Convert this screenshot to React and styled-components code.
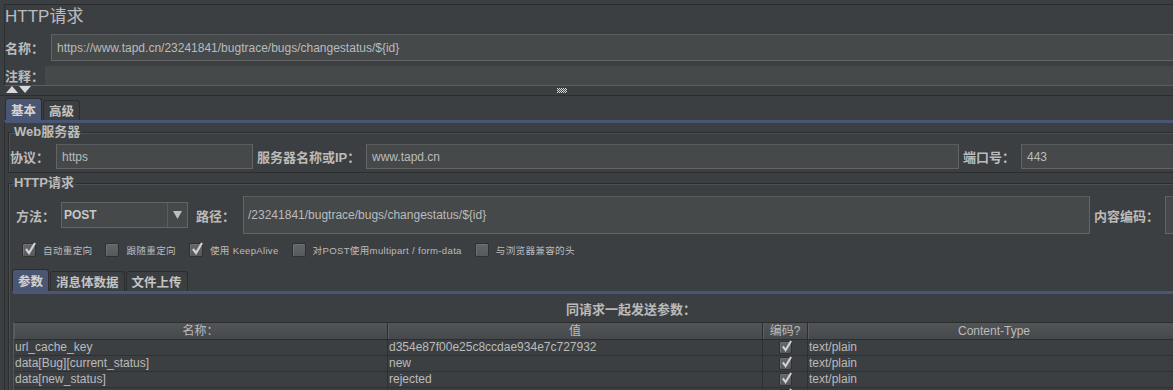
import React from "react";
import styled, { createGlobalStyle } from "styled-components";

const LAT = `"Liberation Sans", "Noto Sans CJK SC", sans-serif`;
const CJK = `"Noto Sans CJK SC", "Liberation Sans", sans-serif`;

const GlobalStyle = createGlobalStyle`
  html, body { margin: 0; padding: 0; background: #3c3f41; overflow: hidden; }
  body { font-family: ${LAT}; color: #bbbbbb; }
  * { box-sizing: border-box; }
`;

const Page = styled.div`
  width: 1250px;
  height: 390px;
  overflow: hidden;
  background: #3c3f41;
`;

const TopPanel = styled.div`
  margin: 4px 0 0 4px;
  border-top: 1px solid #2b2d2e;
  border-left: 1px solid #2b2d2e;
  border-bottom: 1px solid #5c5f61;
`;

const Title = styled.div`
  height: 23px;
  font: 17px ${LAT};
  line-height: 23px;
  color: #bbbbbb;
`;

const FieldRow = styled.div`
  display: flex;
  align-items: center;
  height: ${(p) => p.$h}px;
  margin-top: ${(p) => p.$mt || 0}px;
`;

const Label = styled.span`
  flex: none;
  width: ${(p) => p.$w}px;
  padding-left: ${(p) => p.$pl || 0}px;
  font: bold 13px ${LAT};
  color: #bbbbbb;
  white-space: nowrap;
`;

const TextInput = styled.input`
  flex: ${(p) => (p.$w ? "none" : "1 1 auto")};
  width: ${(p) => (p.$w ? `${p.$w}px` : "auto")};
  min-width: 0;
  height: ${(p) => p.$h || 25}px;
  margin: 0;
  padding: 0 0 0 ${(p) => p.$pl || 5}px;
  background: #45494a;
  border: 1px solid ${(p) => (p.$flat ? "#45494a" : "#646464")};
  border-top-color: ${(p) => (p.$flat ? "#45494a" : "#5a5d5f")};
  outline: none;
  font: 12px ${LAT};
  color: #bbbbbb;
`;

const Splitter = styled.div`
  height: 10px;
  display: flex;
  align-items: center;
  border-bottom: 1px solid #2b2d2e;
`;

const Arrows = styled.div`
  display: flex;
  gap: 1px;
  margin-left: 6px;
  height: 9px;
  align-items: flex-start;
`;

const Grip = styled.div`
  margin-left: 526px;
  display: flex;
`;

const TabArea = styled.div`
  margin-left: ${(p) => p.$ml}px;
  margin-top: ${(p) => p.$mt || 0}px;
`;

const TabRow = styled.div`
  display: flex;
  align-items: flex-end;
  gap: 1px;
  height: ${(p) => p.$h}px;
  padding-left: ${(p) => p.$pl || 0}px;
`;

const Tab = styled.div`
  height: ${(p) => (p.$active ? 22 : 20)}px;
  padding: 0 5px;
  display: flex;
  align-items: center;
  background: ${(p) => (p.$active ? "#4b5772" : "#3c3f41")};
  border: 1px solid #2b2d2e;
  border-bottom: none;
  border-radius: 3px 3px 0 0;
  font: bold 12.5px ${CJK};
  color: ${(p) => (p.$active ? "#d4d4d4" : "#c4c4c4")};
  white-space: nowrap;
`;

const TabPanel = styled.div`
  border-top: 3px solid #4a5676;
  border-left: 1px solid ${(p) => (p.$edge ? "#2b2d2e" : "transparent")};
`;

const Group = styled.fieldset`
  margin: ${(p) => p.$mt}px 0 0 3px;
  padding: ${(p) => p.$pt}px 0 ${(p) => p.$pb}px 0;
  border: 1px solid #2b2d2e;
  box-shadow: inset 1px 1px 0 #4c4f51;
  min-width: 0;
`;

const Legend = styled.legend`
  margin-left: 3px;
  padding: 0 2px;
  font: bold 13px ${LAT};
  line-height: 14px;
  color: #bbbbbb;
`;

const Combo = styled.div`
  flex: none;
  width: 127px;
  height: 26px;
  display: flex;
  background: #45494a;
  border: 1px solid #646464;
`;

const ComboText = styled.div`
  flex: 1;
  display: flex;
  align-items: center;
  padding-left: 2px;
  font: bold 12px ${LAT};
  color: #c8c8c8;
`;

const ComboButton = styled.div`
  width: 20px;
  display: flex;
  align-items: center;
  justify-content: center;
  border-left: 1px solid #5a5d5f;
`;

const CheckRow = styled.div`
  display: flex;
  align-items: center;
  gap: 13px;
  height: 16px;
  margin-top: 8px;
  padding-left: 13px;
`;

const CheckItem = styled.label`
  display: flex;
  align-items: center;
  gap: 7px;
  font: 9.6px ${LAT};
  letter-spacing: 0.3px;
  color: #bbbbbb;
  white-space: nowrap;
`;

const Box = styled.span`
  flex: none;
  position: relative;
  width: ${(p) => p.$s}px;
  height: ${(p) => p.$s}px;
  border-radius: 2px;
  background: linear-gradient(#636669, #57595c);
  border: 1px solid #2e3032;
  box-shadow: inset 1px 1px 0 #6e7174;
`;

const CheckMark = styled.svg`
  position: absolute;
  left: 1px;
  top: -3px;
  overflow: visible;
`;

const ParamsTitle = styled.div`
  height: 28px;
  display: flex;
  align-items: center;
  justify-content: center;
  font: bold 13px ${LAT};
  color: #bbbbbb;
`;

const Table = styled.div`
  width: fit-content;
  border-left: 1px solid #55585a;
`;

const cols = "374px 375px 45px 373px";

const HeadRow = styled.div`
  display: grid;
  grid-template-columns: ${cols};
  height: 18px;
  background: linear-gradient(#525557, #46494b);
  border-top: 1px solid #2b2d2e;
  border-bottom: 1px solid #2b2d2e;
`;

const HeadCell = styled.div`
  text-align: center;
  font: 12px ${LAT};
  line-height: 16px;
  color: #bbbbbb;
  border-right: 1px solid #2b2d2e;
  box-shadow: inset 1px 0 0 #5c5f61;
  white-space: nowrap;
  overflow: hidden;
`;

const Row = styled.div`
  display: grid;
  grid-template-columns: ${cols};
  height: 16px;
  border-bottom: 1px solid #2e3032;
`;

const Cell = styled.div`
  padding-left: 1px;
  font: 12px ${LAT};
  line-height: 15px;
  color: #bbbbbb;
  border-right: 1px solid #2e3032;
  white-space: nowrap;
  overflow: hidden;
  display: flex;
  align-items: center;
  justify-content: ${(p) => (p.$center ? "center" : "flex-start")};
`;

function Check({ checked, size = 14 }) {
  return (
    <Box $s={size}>
      {checked && (
        <CheckMark width={size - 2} height={size} viewBox="0 0 12 14">
          <path d="M2 8 L5 12 L11 2" fill="none" stroke="#d2d2d2" strokeWidth="2.2" strokeLinejoin="miter" />
        </CheckMark>
      )}
    </Box>
  );
}

const rows = [
  ["url_cache_key", "d354e87f00e25c8ccdae934e7c727932", "text/plain"],
  ["data[Bug][current_status]", "new", "text/plain"],
  ["data[new_status]", "rejected", "text/plain"],
  ["", "", ""],
];

export default function App() {
  return (
    <Page>
      <GlobalStyle />
      <TopPanel>
        <Title>HTTP请求</Title>
        <FieldRow $h={27} $mt={6}>
          <Label $w={46}>名称：</Label>
          <TextInput $h={27} readOnly defaultValue="https://www.tapd.cn/23241841/bugtrace/bugs/changestatus/${id}" />
        </FieldRow>
        <FieldRow $h={19} $mt={5}>
          <Label $w={40}>注释：</Label>
          <TextInput $h={19} $flat readOnly defaultValue="" />
        </FieldRow>
      </TopPanel>

      <Splitter>
        <Arrows>
          <svg width="12" height="7" viewBox="0 0 12 7"><path d="M0 7 L6 0 L12 7 Z" fill="#d8d8d8" /></svg>
          <svg width="12" height="7" viewBox="0 0 12 7"><path d="M0 0 L12 0 L6 7 Z" fill="#d8d8d8" /></svg>
        </Arrows>
        <Grip>
          <svg width="10" height="5" viewBox="0 0 10 5">
            {[0, 1, 2, 3, 4].map((y) =>
              [0, 1, 2, 3, 4, 5, 6, 7, 8, 9]
                .filter((x) => (x + y) % 2 === 0)
                .map((x) => <rect key={`${x}-${y}`} x={x} y={y} width="1" height="1" fill="#dcdcdc" />)
            )}
          </svg>
        </Grip>
      </Splitter>

      <TabArea $ml={4}>
        <TabRow $h={24} $pl={1}>
          <Tab $active>基本</Tab>
          <Tab>高级</Tab>
        </TabRow>
        <TabPanel $edge>
          <Group $mt={2} $pt={5} $pb={3}>
            <Legend>Web服务器</Legend>
            <FieldRow $h={25}>
              <Label $w={47} $pl={1}>协议：</Label>
              <TextInput $w={197} readOnly defaultValue="https" />
              <Label $w={113} $pl={4}>服务器名称或IP：</Label>
              <TextInput $w={593} readOnly defaultValue="www.tapd.cn" />
              <Label $w={62} $pl={4}>端口号：</Label>
              <TextInput readOnly defaultValue="443" />
            </FieldRow>
          </Group>

          <Group $mt={3} $pt={6} $pb={0}>
            <Legend>HTTP请求</Legend>
            <FieldRow $h={38}>
              <Label $w={52} $pl={7}>方法：</Label>
              <Combo>
                <ComboText>POST</ComboText>
                <ComboButton>
                  <svg width="9" height="8" viewBox="0 0 9 8"><path d="M0 0 L9 0 L4.5 8 Z" fill="#bdbdbd" /></svg>
                </ComboButton>
              </Combo>
              <Label $w={55} $pl={8}>路径：</Label>
              <TextInput $w={847} $h={38} $pl={4} readOnly defaultValue="/23241841/bugtrace/bugs/changestatus/${id}" />
              <Label $w={75} $pl={4}>内容编码：</Label>
              <TextInput $h={38} readOnly defaultValue="" />
            </FieldRow>

            <CheckRow>
              <CheckItem><Check checked />自动重定向</CheckItem>
              <CheckItem><Check />跟随重定向</CheckItem>
              <CheckItem><Check checked />使用 KeepAlive</CheckItem>
              <CheckItem><Check />对POST使用multipart / form-data</CheckItem>
              <CheckItem><Check />与浏览器兼容的头</CheckItem>
            </CheckRow>

            <TabArea $ml={3} $mt={11}>
              <TabRow $h={22}>
                <Tab $active>参数</Tab>
                <Tab>消息体数据</Tab>
                <Tab>文件上传</Tab>
              </TabRow>
              <TabPanel>
                <ParamsTitle>同请求一起发送参数：</ParamsTitle>
                <Table>
                  <HeadRow>
                    <HeadCell>名称：</HeadCell>
                    <HeadCell>值</HeadCell>
                    <HeadCell>编码?</HeadCell>
                    <HeadCell>Content-Type</HeadCell>
                  </HeadRow>
                  {rows.map((r, i) => (
                    <Row key={i}>
                      <Cell>{r[0]}</Cell>
                      <Cell>{r[1]}</Cell>
                      <Cell $center><Check checked size={13} /></Cell>
                      <Cell>{r[2]}</Cell>
                    </Row>
                  ))}
                </Table>
              </TabPanel>
            </TabArea>
          </Group>
        </TabPanel>
      </TabArea>
    </Page>
  );
}
